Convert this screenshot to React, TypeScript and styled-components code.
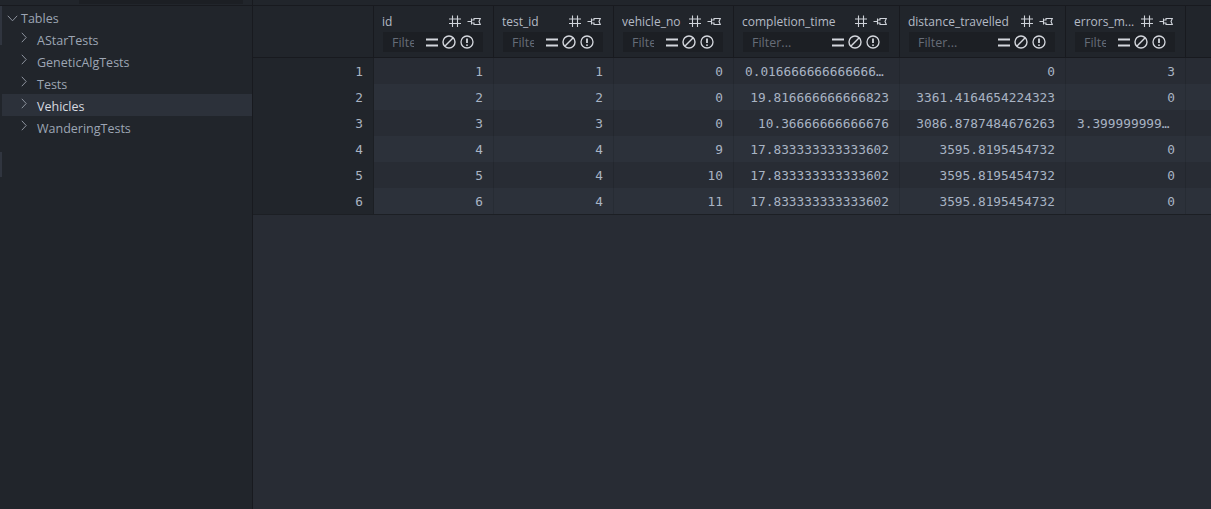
import React from "react";
import styled, { createGlobalStyle } from "styled-components";

const GlobalStyle = createGlobalStyle`
  html, body { margin: 0; padding: 0; background: #282c34; overflow: hidden; }
  #root { height: 100vh; }
  * { box-sizing: border-box; }
`;

const UI_FONT = `"Open Sans", "Noto Sans", sans-serif`;
const MONO_FONT = `"DejaVu Sans Mono", "Liberation Mono", monospace`;

const Shell = styled.div`
  display: flex;
  height: 100vh;
  width: 100%;
  font-family: ${UI_FONT};
`;

const Sidebar = styled.aside`
  position: relative;
  width: 253px;
  flex: none;
  background: #21252b;
  border-right: 1px solid #181a1f;
  display: flex;
  flex-direction: column;
`;

const TopStrip = styled.div`
  height: 6px;
  flex: none;
  border-bottom: 1px solid #181a1f;
  background: #21252b;
  display: flex;
`;

const SearchStub = styled.div`
  margin-left: 79px;
  width: 164px;
  height: 4px;
  background: #1c1f24;
`;

const ScrollMark = styled.div<{ $top: number; $h: number }>`
  position: absolute;
  left: 0;
  top: ${(p) => p.$top}px;
  width: 2px;
  height: ${(p) => p.$h}px;
  background: #30353f;
`;

const Tree = styled.div`
  display: flex;
  flex-direction: column;
  padding-left: 2px;
`;

const TreeRow = styled.div<{ $depth: number; $selected?: boolean }>`
  height: 22px;
  display: flex;
  align-items: center;
  padding-top: 2px;
  padding-left: ${(p) => (p.$depth === 0 ? 5 : 19)}px;
  background: ${(p) => (p.$selected ? "#2c313a" : "transparent")};
  color: ${(p) => (p.$selected ? "#d7dae0" : "#9da5b4")};
  font-size: 12.5px;
  white-space: nowrap;
`;

const Chevron = styled.span<{ $depth: number }>`
  width: ${(p) => (p.$depth === 0 ? 14 : 16)}px;
  height: 20px;
  display: flex;
  align-items: ${(p) => (p.$depth === 0 ? "center" : "flex-start")};
  padding-top: ${(p) => (p.$depth === 0 ? 0 : 2)}px;
  flex: none;
`;

const Main = styled.main`
  flex: 1;
  min-width: 0;
  display: flex;
  flex-direction: column;
  background: #282c34;
`;

const COLS = "121px 120px 120px 120px 166px 166px 120px 1fr";

const HeaderRow = styled.div`
  display: grid;
  grid-template-columns: ${COLS};
  background: #21252b;
  border-bottom: 1px solid #181a1f;
  height: 52px;
`;

const HeaderCell = styled.div`
  border-right: 1px solid #181a1f;
  padding: 5px 10px 0 8px;
  display: flex;
  flex-direction: column;
  gap: 1px;
  min-width: 0;
  &:last-child { border-right: none; }
`;

const LabelRow = styled.div`
  height: 20px;
  display: flex;
  align-items: center;
  gap: 5px;
  padding-right: 2px;
`;

const Label = styled.span`
  flex: 1;
  min-width: 0;
  overflow: hidden;
  text-overflow: ellipsis;
  white-space: nowrap;
  color: #b4bac5;
  font-size: 12px;
`;

const IconBox = styled.span`
  width: 14px;
  height: 14px;
  flex: none;
  display: inline-flex;
  color: #cfd3da;
`;

const FilterBox = styled.div`
  height: 20px;
  background: #1c1f24;
  display: flex;
  align-items: center;
  padding: 0 9px 0 9px;
  margin-left: 1px;
`;

const FilterInput = styled.input`
  flex: 1;
  min-width: 0;
  background: transparent;
  border: none;
  outline: none;
  padding: 0;
  margin-right: 12px;
  font-family: ${UI_FONT};
  font-size: 12.5px;
  color: #abb2bf;
  &::placeholder { color: #666c77; }
`;

const FilterIcons = styled.div`
  display: flex;
  align-items: center;
  gap: 4px;
  color: #d4d7dd;
`;

const Body = styled.div`
  border-bottom: 1px solid #1c1f24;
`;

const DataRow = styled.div<{ $even: boolean }>`
  display: grid;
  grid-template-columns: ${COLS};
  height: 26px;
  background: ${(p) => (p.$even ? "#2c313a" : "#282c34")};
`;

const RowNum = styled.div`
  background: #21252b;
  border-right: 1px solid #1c1f24;
  text-align: right;
  padding: 1px 10px 0 0;
  line-height: 25px;
  font-family: ${MONO_FONT};
  font-size: 12.8px;
  color: #aab3c1;
`;

const Cell = styled.div`
  border-right: 1px solid rgba(0, 0, 0, 0.1);
  text-align: right;
  padding: 1px 10px 0 11px;
  line-height: 25px;
  font-family: ${MONO_FONT};
  font-size: 12.8px;
  color: #a9b4c4;
  overflow: hidden;
  white-space: nowrap;
  text-overflow: ellipsis;
  min-width: 0;
`;

const Filler = styled.div``;

const ChevronDown = () => (
  <svg width="11" height="7" viewBox="0 0 11 7" fill="none">
    <path d="M0.8 0.8 L5.5 5.8 L10.2 0.8" stroke="#8d939e" strokeWidth="1" />
  </svg>
);

const ChevronRight = () => (
  <svg width="6" height="11" viewBox="0 0 6 11" fill="none">
    <path d="M0.8 0.8 L5.2 5.5 L0.8 10.2" stroke="#8d939e" strokeWidth="1" />
  </svg>
);

const HashIcon = () => (
  <svg width="14" height="14" viewBox="0 0 14 14" fill="none" stroke="currentColor" strokeWidth="1.1">
    <path d="M4.5 1.5 V13 M9.5 1.5 V13 M1 5 H13 M1 9.5 H13" />
  </svg>
);

const PinIcon = () => (
  <svg width="14" height="14" viewBox="0 0 14 14" fill="none" stroke="currentColor" strokeWidth="1.1">
    <path d="M0.5 7.5 H4 M4.5 4.5 V10.5 M4.5 6 H7 V4.5 H13.3 L12 7.5 L13.3 10.5 H7 V9 H4.5" />
  </svg>
);

const EqualsIcon = () => (
  <svg width="12" height="14" viewBox="0 0 12 14" fill="currentColor">
    <rect x="0" y="3.5" width="12" height="2" />
    <rect x="0" y="9.5" width="12" height="2" />
  </svg>
);

const SlashIcon = () => (
  <svg width="14" height="14" viewBox="0 0 14 14" fill="none" stroke="currentColor" strokeWidth="1.4">
    <circle cx="7" cy="7" r="6" />
    <path d="M2.8 11.2 L11.2 2.8" />
  </svg>
);

const AlertIcon = () => (
  <svg width="14" height="14" viewBox="0 0 14 14" fill="none" stroke="currentColor" strokeWidth="1.3">
    <circle cx="7" cy="7" r="6" />
    <path d="M7 3.6 V8" strokeWidth="1.8" />
    <circle cx="7" cy="10.2" r="0.9" fill="currentColor" stroke="none" />
  </svg>
);

const tables = ["AStarTests", "GeneticAlgTests", "Tests", "Vehicles", "WanderingTests"];

const columns = ["id", "test_id", "vehicle_no", "completion_time", "distance_travelled", "errors_made"];
const columnLabels = ["id", "test_id", "vehicle_no", "completion_time", "distance_travelled", "errors_m..."];

const rows: string[][] = [
  ["1", "1", "0", "0.01666666666666667", "0", "3"],
  ["2", "2", "0", "19.816666666666823", "3361.4164654224323", "0"],
  ["3", "3", "0", "10.36666666666676", "3086.8787484676263", "3.3999999999999995"],
  ["4", "4", "9", "17.833333333333602", "3595.8195454732", "0"],
  ["5", "4", "10", "17.833333333333602", "3595.8195454732", "0"],
  ["6", "4", "11", "17.833333333333602", "3595.8195454732", "0"],
];

export default function App() {
  return (
    <>
      <GlobalStyle />
      <Shell>
        <Sidebar>
          <TopStrip>
            <SearchStub />
          </TopStrip>
          <Tree>
            <TreeRow $depth={0}>
              <Chevron $depth={0}>
                <ChevronDown />
              </Chevron>
              Tables
            </TreeRow>
            {tables.map((t) => (
              <TreeRow key={t} $depth={1} $selected={t === "Vehicles"}>
                <Chevron $depth={1}>
                  <ChevronRight />
                </Chevron>
                {t}
              </TreeRow>
            ))}
          </Tree>
          <ScrollMark $top={6} $h={39} />
          <ScrollMark $top={152} $h={25} />
        </Sidebar>
        <Main>
          <TopStrip />
          <HeaderRow>
            <HeaderCell />
            {columns.map((c, i) => (
              <HeaderCell key={c} title={c}>
                <LabelRow>
                  <Label>{columnLabels[i]}</Label>
                  <IconBox>
                    <HashIcon />
                  </IconBox>
                  <IconBox>
                    <PinIcon />
                  </IconBox>
                </LabelRow>
                <FilterBox>
                  <FilterInput placeholder="Filter..." />
                  <FilterIcons>
                    <EqualsIcon />
                    <SlashIcon />
                    <AlertIcon />
                  </FilterIcons>
                </FilterBox>
              </HeaderCell>
            ))}
            <HeaderCell />
          </HeaderRow>
          <Body>
            {rows.map((r, i) => (
              <DataRow key={i} $even={i % 2 === 1}>
                <RowNum>{i + 1}</RowNum>
                {r.map((v, j) => (
                  <Cell key={j}>{v}</Cell>
                ))}
                <Filler />
              </DataRow>
            ))}
          </Body>
        </Main>
      </Shell>
    </>
  );
}
